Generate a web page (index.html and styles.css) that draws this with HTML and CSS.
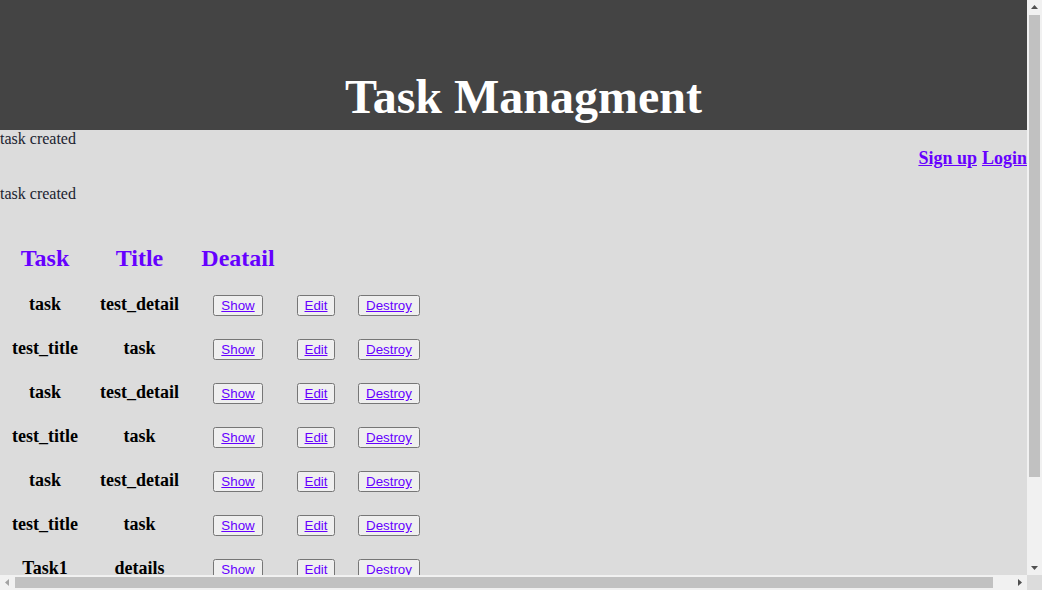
FILE: index.html
```html
<!DOCTYPE html>
<html>
<head>
<meta charset="utf-8">
<title>Task Managment</title>
<link rel="stylesheet" href="styles.css">
</head>
<body>
<div class="window">
  <div class="viewport">
    <div class="page">
      <header class="top">
        <h1 class="title">Task Managment</h1>
      </header>
      <div class="notice">task created</div>
      <nav class="nav"><a href="#">Sign up</a> <a href="#">Login</a></nav>
      <p class="notice second">task created</p>
      <table class="tasks">
        <colgroup>
          <col class="c1"><col class="c2"><col class="c3"><col class="c4"><col class="c5">
        </colgroup>
        <thead>
          <tr><th>Task</th><th>Title</th><th>Deatail</th><th></th><th></th></tr>
        </thead>
        <tbody>
          <tr><td>task</td><td>test_detail</td><td><button class="btn"><a href="#">Show</a></button></td><td><button class="btn"><a href="#">Edit</a></button></td><td><button class="btn"><a href="#">Destroy</a></button></td></tr>
          <tr><td>test_title</td><td>task</td><td><button class="btn"><a href="#">Show</a></button></td><td><button class="btn"><a href="#">Edit</a></button></td><td><button class="btn"><a href="#">Destroy</a></button></td></tr>
          <tr><td>task</td><td>test_detail</td><td><button class="btn"><a href="#">Show</a></button></td><td><button class="btn"><a href="#">Edit</a></button></td><td><button class="btn"><a href="#">Destroy</a></button></td></tr>
          <tr><td>test_title</td><td>task</td><td><button class="btn"><a href="#">Show</a></button></td><td><button class="btn"><a href="#">Edit</a></button></td><td><button class="btn"><a href="#">Destroy</a></button></td></tr>
          <tr><td>task</td><td>test_detail</td><td><button class="btn"><a href="#">Show</a></button></td><td><button class="btn"><a href="#">Edit</a></button></td><td><button class="btn"><a href="#">Destroy</a></button></td></tr>
          <tr><td>test_title</td><td>task</td><td><button class="btn"><a href="#">Show</a></button></td><td><button class="btn"><a href="#">Edit</a></button></td><td><button class="btn"><a href="#">Destroy</a></button></td></tr>
          <tr><td>Task1</td><td>details</td><td><button class="btn"><a href="#">Show</a></button></td><td><button class="btn"><a href="#">Edit</a></button></td><td><button class="btn"><a href="#">Destroy</a></button></td></tr>
        </tbody>
      </table>
    </div>
  </div>
  <div class="vscroll">
    <div class="sb-btn"><svg width="15" height="15" viewBox="0 0 15 15"><polygon points="4,9 11,9 7.5,5" fill="#505050"/></svg></div>
    <div class="vtrack"><div class="vthumb"></div></div>
    <div class="sb-btn"><svg width="15" height="15" viewBox="0 0 15 15"><polygon points="4,6 11,6 7.5,10" fill="#505050"/></svg></div>
  </div>
  <div class="hscroll">
    <div class="sb-btn"><svg width="15" height="15" viewBox="0 0 15 15"><polygon points="9,4 9,11 5,7.5" fill="#a3a3a3"/></svg></div>
    <div class="htrack"><div class="hthumb"></div></div>
    <div class="sb-btn"><svg width="15" height="15" viewBox="0 0 15 15"><polygon points="6,4 6,11 10,7.5" fill="#505050"/></svg></div>
  </div>
  <div class="corner"></div>
</div>
</body>
</html>
```

FILE: styles.css
```css
html, body {
  margin: 0;
  padding: 0;
  background: #dcdcdc;
  overflow: hidden;
}

body {
  font-family: "Liberation Serif", "Times New Roman", serif;
  font-size: 16px;
  color: #1b2330;
}

.window {
  display: grid;
  grid-template-columns: 1027px 15px;
  grid-template-rows: 575px 15px;
  width: 1042px;
  height: 590px;
}

.viewport {
  overflow: hidden;
}

.page {
  width: 1047px;
}

.top {
  background: #444444;
  height: 130px;
  display: flex;
  align-items: flex-end;
  justify-content: center;
}

.title {
  margin: 0 0 6px 0;
  color: #ffffff;
  font-size: 48px;
  font-weight: bold;
  line-height: 55px;
}

.notice {
  margin: 0;
  line-height: 18px;
}

.notice.second {
  margin: 16px 0 42px 0;
}

.nav {
  display: flex;
  justify-content: flex-end;
  gap: 5px;
  margin-right: 20px;
  font-size: 18px;
  font-weight: bold;
  line-height: 21px;
}

.nav a,
.tasks a,
.tasks th {
  color: #6600ff;
}

.tasks {
  border-collapse: collapse;
  border-spacing: 0;
  table-layout: fixed;
  width: 433px;
}

.c1 { width: 90px; }
.c2 { width: 99px; }
.c3 { width: 98px; }
.c4 { width: 58px; }
.c5 { width: 88px; }

.tasks th {
  font-size: 24px;
  font-weight: bold;
  height: 49px;
  padding: 0;
  text-align: center;
  vertical-align: baseline;
}

.tasks td {
  height: 44px;
  padding: 0;
  text-align: center;
  vertical-align: baseline;
  font-size: 18px;
  font-weight: bold;
  color: #000000;
}

.btn {
  font-family: "Liberation Sans", Arial, sans-serif;
  font-size: 13.333px;
  font-weight: normal;
}

/* scrollbars */
.vscroll {
  display: flex;
  flex-direction: column;
  background: #f1f1f1;
}

.hscroll {
  display: flex;
  background: #f1f1f1;
}

.sb-btn {
  width: 15px;
  height: 15px;
  flex: none;
}

.sb-btn svg {
  display: block;
}

.vtrack {
  flex: 1;
  padding: 0 2px;
}

.vthumb {
  height: 462px;
  background: #c1c1c1;
}

.htrack {
  flex: 1;
  padding: 2px 0;
}

.hthumb {
  width: 978px;
  height: 11px;
  background: #c1c1c1;
}

.corner {
  background: #dcdcdc;
}
```
